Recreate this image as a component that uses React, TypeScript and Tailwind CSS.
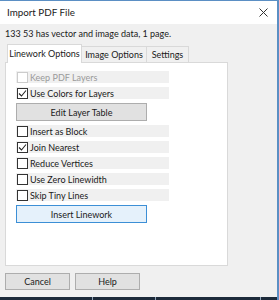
import React from "react";

const font = { fontFamily: 'Lato, "Noto Sans", sans-serif' };

function Check({ label, checked, disabled }: { label: string; checked?: boolean; disabled?: boolean }) {
    return (
        <div className="flex items-center h-[12px] w-[153px] bg-[#f0f0f0] pl-[1px]">
            <div
                className={`w-[11px] h-[11px] bg-white border flex items-center justify-center ${
                    disabled ? "border-[#cccccc]" : "border-[#333333]"
                }`}
            >
                {checked && (
                    <svg width="9" height="9" viewBox="0 0 9 9">
                        <polyline points="1,4.5 3.5,7 8,1.5" fill="none" stroke="#222" strokeWidth="1.1" />
                    </svg>
                )}
            </div>
            <span className={`ml-[2px] text-[9px] leading-none ${disabled ? "text-[#9a9a9a]" : "text-[#1a1a1a]"}`}>
                {label}
            </span>
        </div>
    );
}

export default function App() {
    return (
        <div
            className="w-[279px] h-[300px] bg-[#f0f0f0] flex flex-col relative border-t border-r-2 border-[#5b8fc4] overflow-hidden whitespace-nowrap"
            style={font}
        >
            {/* Title bar */}
            <div className="h-[23px] bg-white flex items-center justify-between pl-[7px] pr-[9px] shrink-0">
                <span className="text-[9.8px] text-[#1a1a1a]">Import PDF File</span>
                <svg width="9" height="9" viewBox="0 0 9 9">
                    <path d="M0.5 0.5 L8.5 8.5 M8.5 0.5 L0.5 8.5" stroke="#333" strokeWidth="1" />
                </svg>
            </div>

            <div className="h-[18px] flex items-center pl-[5px] pt-[2px] text-[9px] text-[#1a1a1a]">
                133 53 has vector and image data, 1 page.
            </div>

            {/* Tabs */}
            <div className="flex items-end h-[19px] pl-[7px] mt-[1px] text-[9px] text-[#1a1a1a]">
                <div className="h-[19px] w-[75px] bg-white border border-b-0 border-[#d9d9d9] flex items-center justify-center relative z-10 -mb-px">
                    Linework Options
                </div>
                <div className="h-[16px] w-[65px] bg-[#f0f0f0] border border-b-0 border-l-0 border-[#d9d9d9] flex items-center justify-center">
                    Image Options
                </div>
                <div className="h-[16px] w-[42px] bg-[#f0f0f0] border border-b-0 border-l-0 border-[#d9d9d9] flex items-center justify-center">
                    Settings
                </div>
            </div>

            {/* Tab panel */}
            <div className="ml-[5px] w-[223px] h-[204px] bg-white border border-[#d9d9d9] pt-[8px] pl-[10px] flex flex-col gap-[4px] shrink-0">
                <Check label="Keep PDF Layers" disabled />
                <Check label="Use Colors for Layers" checked />
                <button className="w-[131px] h-[18px] bg-[#e1e1e1] border border-[#adadad] text-[9px] text-[#1a1a1a] leading-none">
                    Edit Layer Table
                </button>
                <Check label="Insert as Block" />
                <Check label="Join Nearest" checked />
                <Check label="Reduce Vertices" />
                <Check label="Use Zero Linewidth" />
                <Check label="Skip Tiny Lines" />
                <button className="w-[131px] h-[18px] bg-[#e5f1fb] border border-[#3c8fd6] text-[9px] text-[#1a1a1a] leading-none">
                    Insert Linework
                </button>
            </div>

            {/* Bottom buttons */}
            <div className="flex gap-[5px] pl-[5px] mt-[7px]">
                <button className="w-[65px] h-[17px] bg-[#e1e1e1] border border-[#adadad] text-[9px] text-[#1a1a1a] leading-none">
                    Cancel
                </button>
                <button className="w-[65px] h-[17px] bg-[#e1e1e1] border border-[#adadad] text-[9px] text-[#1a1a1a] leading-none">
                    Help
                </button>
            </div>

            {/* Taskbar edge */}
            <div className="mt-auto h-[3px] bg-[#1c2a3a] flex shrink-0">
                <div className="w-[92px]" />
                <div className="w-px bg-[#8fa3b8]" />
                <div className="w-[62px]" />
                <div className="w-px bg-[#8fa3b8]" />
                <div className="w-[104px]" />
                <div className="w-px bg-[#8fa3b8]" />
            </div>
        </div>
    );
}
